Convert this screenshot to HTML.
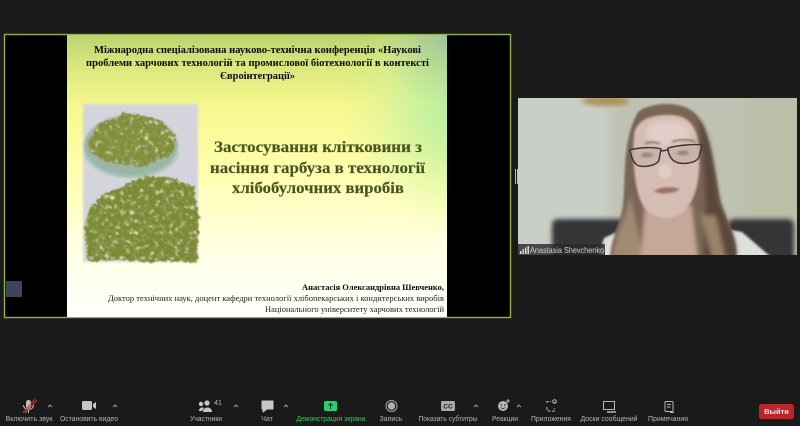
<!DOCTYPE html>
<html><head><meta charset="utf-8"><style>
html,body{margin:0;padding:0;background:#1a1a1a;width:800px;height:426px;overflow:hidden}
svg{display:block}
.s{font-family:"Liberation Serif",serif;font-weight:bold;fill:#0a0a0a}
.l{font-family:"Liberation Sans",sans-serif;font-size:7px;fill:#b4b4b4;text-anchor:middle}
</style></head><body>
<svg width="800" height="426" viewBox="0 0 800 426" xmlns="http://www.w3.org/2000/svg">
<defs>
<linearGradient id="bg" x1="0" y1="0" x2="0" y2="1">
<stop offset="0" stop-color="#bcd26e"/><stop offset=".1" stop-color="#d8e67c"/><stop offset=".26" stop-color="#f6f88e"/><stop offset=".5" stop-color="#ffffb0"/><stop offset=".75" stop-color="#ffffe2"/><stop offset="1" stop-color="#fff"/>
</linearGradient>
<radialGradient id="rg" gradientUnits="userSpaceOnUse" cx="465" cy="110" r="125">
<stop offset="0" stop-color="#b0eca4" stop-opacity="1"/><stop offset=".45" stop-color="#c0f0a0" stop-opacity=".65"/><stop offset="1" stop-color="#e0f4a0" stop-opacity="0"/>
</radialGradient>
<radialGradient id="tr" gradientUnits="userSpaceOnUse" cx="450" cy="32" r="75">
<stop offset="0" stop-color="#98bca0" stop-opacity=".95"/><stop offset="1" stop-color="#b0d090" stop-opacity="0"/>
</radialGradient>
<filter id="b05"><feGaussianBlur stdDeviation=".35"/></filter>
<filter id="b1" x="-20%" y="-20%" width="140%" height="140%"><feGaussianBlur stdDeviation="1"/></filter>
<filter id="b2" x="-30%" y="-30%" width="160%" height="160%"><feGaussianBlur stdDeviation="2.5"/></filter>
<filter id="b4" x="-40%" y="-40%" width="180%" height="180%"><feGaussianBlur stdDeviation="6"/></filter>
<filter id="leaf" x="-8%" y="-8%" width="116%" height="116%">
<feTurbulence type="fractalNoise" baseFrequency=".2" numOctaves="3" seed="7" result="t"/>
<feDisplacementMap in="SourceGraphic" in2="t" scale="7" xChannelSelector="R" yChannelSelector="G" result="d"/>
<feColorMatrix in="t" values="0 0 0 0 .8  0 0 0 0 .78  0 0 0 0 .46  4 0 0 0 -2.3" result="lite"/>
<feComposite in="lite" in2="d" operator="in" result="n1"/>
<feTurbulence type="fractalNoise" baseFrequency=".24" numOctaves="2" seed="21" result="t2"/>
<feColorMatrix in="t2" values="0 0 0 0 .27  0 0 0 0 .32  0 0 0 0 .1  0 4 0 0 -2" result="dark"/>
<feComposite in="dark" in2="d" operator="in" result="n2"/>
<feMerge result="m"><feMergeNode in="d"/><feMergeNode in="n1"/><feMergeNode in="n2"/></feMerge>
<feGaussianBlur in="m" stdDeviation=".5"/>
</filter>
<clipPath id="vid"><rect x="518" y="98" width="279" height="157"/></clipPath>
<clipPath id="ph"><rect x="70" y="95" width="135" height="172"/></clipPath>
</defs>

<rect width="800" height="426" fill="#1a1a1a"/>

<!-- shared screen -->
<rect x="4.5" y="34.5" width="506" height="283" fill="#000" stroke="#8fb04a" stroke-width="1.4"/>
<rect x="67" y="35" width="380" height="282" fill="url(#bg)"/>
<rect x="67" y="35" width="380" height="282" fill="url(#rg)"/>
<rect x="67" y="35" width="380" height="282" fill="url(#tr)"/>
<rect x="6" y="281" width="16" height="16" fill="#3d4658"/>

<g filter="url(#b05)">
<text class="s" x="94" y="53" textLength="327" lengthAdjust="spacingAndGlyphs" style="font-size:10.5px">Міжнародна спеціалізована науково-технічна конференція «Наукові</text>
<text class="s" x="86" y="66" textLength="343" lengthAdjust="spacingAndGlyphs" style="font-size:10.5px">проблеми харчових технологій та промислової біотехнології в контексті</text>
<text class="s" x="220" y="79" textLength="75" lengthAdjust="spacingAndGlyphs" style="font-size:10.5px">Євроінтеграції»</text>
</g>

<!-- photo -->
<g clip-path="url(#ph)">
<rect x="83" y="104" width="115" height="158" fill="#d4d4dc" filter="url(#b1)"/>
<ellipse cx="131" cy="146" rx="47" ry="31" fill="#9cb5a6" filter="url(#b1)"/>
<path d="M88 142 L100 122 L116 119 L124 112 L140 116 L158 119 L176 136 L172 154 L142 166 L108 163 L90 152Z" fill="#7f8f37" filter="url(#leaf)"/>
<path d="M84 228 L90 208 L106 192 L124 186 L142 176 L172 178 L194 186 L199 222 L197 262 L150 262 L120 260 L88 262Z" fill="#7a8a30" filter="url(#leaf)"/>
<path d="M85 152 C92 184 170 184 178 152" fill="none" stroke="#9fc4ba" stroke-width="2.500" filter="url(#b1)" opacity=".9"/>
</g>

<g filter="url(#b05)">
<text class="s" x="214" y="152" textLength="208" lengthAdjust="spacingAndGlyphs" style="fill:#465420;stroke:#465420;stroke-width:.15;font-size:16px">Застосування клітковини з</text>
<text class="s" x="210" y="173" textLength="215" lengthAdjust="spacingAndGlyphs" style="fill:#465420;stroke:#465420;stroke-width:.15;font-size:16px">насіння гарбуза в технології</text>
<text class="s" x="232" y="193" textLength="172" lengthAdjust="spacingAndGlyphs" style="fill:#465420;stroke:#465420;stroke-width:.15;font-size:16px">хлібобулочних виробів</text>
<text class="s" x="302" y="290" textLength="142" lengthAdjust="spacingAndGlyphs" style="font-size:8px">Анастасія Олександрівна Шевченко,</text>
<text class="s" x="108" y="301" textLength="336" lengthAdjust="spacingAndGlyphs" style="font-size:8px;font-weight:normal;fill:#222">Доктор технічних наук, доцент кафедри технології хлібопекарських і кондитерських виробів</text>
<text class="s" x="265" y="312" textLength="179" lengthAdjust="spacingAndGlyphs" style="font-size:8px;font-weight:normal;fill:#222">Національного університету харчових технологій</text>
</g>

<!-- splitter handle -->
<rect x="515" y="169" width="1" height="15" fill="#bdbdbd"/><rect x="517" y="169" width="1" height="15" fill="#bdbdbd"/>

<!-- video -->
<g clip-path="url(#vid)">
<rect x="518" y="98" width="279" height="157" fill="#bfc2b3"/>
<rect x="500" y="90" width="110" height="175" fill="#c9cfc6" filter="url(#b4)"/>
<rect x="745" y="90" width="70" height="175" fill="#bcbea8" filter="url(#b4)"/>
<ellipse cx="606" cy="101" rx="24" ry="5" fill="#a8935a" filter="url(#b2)"/>
<rect x="552" y="219" width="72" height="50" rx="6" fill="#353537" filter="url(#b2)"/>
<rect x="728" y="219" width="66" height="50" rx="6" fill="#353537" filter="url(#b2)"/>
<!-- shirt -->
<path d="M598 258 L604 238 L630 226 L710 226 L742 232 L772 258Z" fill="#dfe0da" filter="url(#b1)"/>
<!-- hair -->
<path d="M638 112 C650 102 682 100 696 114 C710 130 714 170 720 200 C728 225 738 240 736 258 L610 258 C612 235 620 225 623 205 C626 175 622 140 638 112Z" fill="#7a6555" filter="url(#b1)"/>
<path d="M698 118 C712 135 714 175 720 205 C728 225 738 240 736 258 L703 258 C708 220 706 170 698 118Z" fill="#5a473b" filter="url(#b2)"/>
<path d="M612 258 C616 230 626 220 630 195 L640 240 L644 258Z" fill="#a18a72" filter="url(#b2)"/>
<path d="M700 215 L712 258 L726 258 L716 215Z" fill="#9a8168" filter="url(#b2)"/>
<!-- neck -->
<path d="M645 205 L692 205 L698 258 L640 258Z" fill="#c6a89a" filter="url(#b2)"/>
<!-- face -->
<g filter="url(#b05)">
<path d="M634 135 C636 118 655 114 672 115 C690 116 698 128 699 150 C701 180 695 205 680 214 C668 221 652 218 644 207 C635 195 632 160 634 135Z" fill="#d6bdb3" filter="url(#b1)"/>
<ellipse cx="668" cy="133" rx="22" ry="12" fill="#e0cfc8" filter="url(#b2)"/>
<ellipse cx="665" cy="171" rx="7" ry="7" fill="#e0ccc6" filter="url(#b1)"/>
<g fill="#c2b0a8" fill-opacity=".7" stroke="#3a3236" stroke-width="1.4" stroke-linejoin="round">
<path d="M630 150 C640 147 655 147 661 149 L659 160 C657 166 642 168 637 165 C633 162 631 156 630 150Z"/>
<path d="M668 148 C678 145 695 144 702 145 L699 157 C696 164 680 165 674 161 C670 158 668 153 668 148Z"/>
<path d="M661 151 L668 150" fill="none"/>
</g>
<ellipse cx="647" cy="155" rx="6" ry="2.5" fill="#6a5a58" opacity=".5" filter="url(#b1)"/>
<ellipse cx="683" cy="153" rx="6" ry="2.5" fill="#6a5a58" opacity=".5" filter="url(#b1)"/>
<path d="M645 144 C650 141 655 142 660 144 M672 142 C680 139 688 139 696 142" stroke="#6e5a50" stroke-width="1.4" fill="none" filter="url(#b1)"/>
<path d="M654 191 C660 187 672 186 680 189 C674 194 660 195 654 191Z" fill="#9a7068" filter="url(#b1)"/>
</g>
<!-- name -->
<rect x="518" y="244" width="87" height="11" fill="#2a2a2a" fill-opacity=".82"/>
<g fill="#e6e6e6"><rect x="520" y="251" width="1.4" height="3"/><rect x="522.5" y="249" width="1.4" height="5"/><rect x="525" y="247.5" width="1.4" height="6.5"/><rect x="527.5" y="246" width="1.4" height="8"/></g>
<text x="530" y="253" font-family="Liberation Sans" font-size="8" fill="#cfcfcf" textLength="74" lengthAdjust="spacingAndGlyphs" filter="url(#b05)">Anastasia Shevchenko</text>
</g>

<!-- toolbar icons -->
<g filter="url(#b05)">
<!-- mic -->
<rect x="26" y="400" width="5" height="9" rx="2.5" fill="#bdbdbd"/>
<path d="M23.5 405 C23.5 411 33.5 411 33.5 405 M28.5 410 V413" stroke="#bdbdbd" fill="none"/>
<path d="M23 413 L35 399 M25 413 L37 400" stroke="#c23a3a" stroke-width="1"/>
<!-- camera -->
<rect x="82" y="401" width="10" height="9" rx="1.5" fill="#c6c6c6"/><path d="M93 404 L96 402 V409 L93 407Z" fill="#c6c6c6"/>
<!-- participants -->
<circle cx="207" cy="403" r="2.6" fill="#c6c6c6"/><circle cx="201" cy="404" r="2.2" fill="#c6c6c6"/><path d="M203 412 C203 406 212 406 212 412Z M199 411 C199 407 203 407 204 408 L202 411Z" fill="#c6c6c6"/>
<text x="218" y="405" font-family="Liberation Sans" font-size="7" fill="#bdbdbd" text-anchor="middle">41</text>
<!-- chat -->
<path d="M262 401 H273 V409 H267 L263 412 V409 H262Z" fill="#c6c6c6" stroke="#c6c6c6" stroke-linejoin="round"/>
<!-- share -->
<rect x="324" y="401" width="13" height="10" rx="1.5" fill="#25d366"/><path d="M330.5 409 V404 M328.5 405.5 L330.5 403.5 L332.5 405.5" stroke="#123" stroke-width="1" fill="none"/>
<!-- record -->
<circle cx="391.5" cy="406" r="5.5" fill="none" stroke="#a8a8a8"/><circle cx="391.5" cy="406" r="3.7" fill="#b0b0b0"/>
<!-- cc -->
<rect x="441" y="401" width="14" height="10" rx="1.5" fill="#a8a8a8"/><text x="448" y="408.5" font-family="Liberation Sans" font-size="6.5" font-weight="bold" fill="#222" text-anchor="middle">CC</text>
<!-- reaction -->
<circle cx="503" cy="406" r="5" fill="#b8b8b8"/><circle cx="501.2" cy="405" r=".8" fill="#222"/><circle cx="504.8" cy="405" r=".8" fill="#222"/><path d="M500.8 407.5 Q503 409.5 505.2 407.5" stroke="#222" fill="none" stroke-width=".8"/><path d="M508 399 V403 M506 401 H510" stroke="#b8b8b8"/>
<!-- apps -->
<path d="M547 403 V401.5 H551 M547 407 V411 H554.5 V408 M555 403 V402" stroke="#b8b8b8" fill="none" stroke-dasharray="3 1.5"/><circle cx="554.5" cy="401.5" r="1.8" fill="none" stroke="#b8b8b8"/>
<!-- whiteboard -->
<rect x="603.5" y="401.5" width="11" height="8" fill="none" stroke="#b8b8b8"/><path d="M607 412 H616" stroke="#b8b8b8" stroke-width="1.5"/>
<!-- notes -->
<rect x="665" y="401.5" width="8" height="10" rx="1" fill="none" stroke="#b8b8b8"/><path d="M667 404.5 H671 M667 407 H670.5 M670 412.5 H674" stroke="#b8b8b8"/>
<!-- carets -->
<g stroke="#a8a8a8" fill="none" stroke-width=".9">
<path d="M48 407 L50 405 L52 407"/><path d="M113 407 L115 405 L117 407"/><path d="M234 407 L236 405 L238 407"/><path d="M284 407 L286 405 L288 407"/><path d="M474 407 L476 405 L478 407"/><path d="M517 407 L519 405 L521 407"/>
</g>
<!-- labels -->
<text class="l" x="29" y="421" textLength="47" lengthAdjust="spacingAndGlyphs">Включить звук</text>
<text class="l" x="89" y="421" textLength="58" lengthAdjust="spacingAndGlyphs">Остановить видео</text>
<text class="l" x="206" y="421" textLength="32" lengthAdjust="spacingAndGlyphs">Участники</text>
<text class="l" x="267" y="421">Чат</text>
<text class="l" x="331" y="421" textLength="69" lengthAdjust="spacingAndGlyphs" style="fill:#35c95f">Демонстрация экрана</text>
<text class="l" x="391" y="421" textLength="23" lengthAdjust="spacingAndGlyphs">Запись</text>
<text class="l" x="448" y="421" textLength="59" lengthAdjust="spacingAndGlyphs">Показать субтитры</text>
<text class="l" x="505" y="421" textLength="26" lengthAdjust="spacingAndGlyphs">Реакции</text>
<text class="l" x="551" y="421" textLength="40" lengthAdjust="spacingAndGlyphs">Приложения</text>
<text class="l" x="609" y="421" textLength="57" lengthAdjust="spacingAndGlyphs">Доски сообщений</text>
<text class="l" x="668" y="421" textLength="40" lengthAdjust="spacingAndGlyphs">Примечания</text>
<!-- leave -->
<rect x="759" y="404" width="35" height="15" rx="2.5" fill="#b9262c"/>
<text x="776.5" y="414" font-family="Liberation Sans" font-size="7.5" font-weight="bold" fill="#f2e4e4" text-anchor="middle">Выйти</text>
</g>
</svg>
</body></html>
